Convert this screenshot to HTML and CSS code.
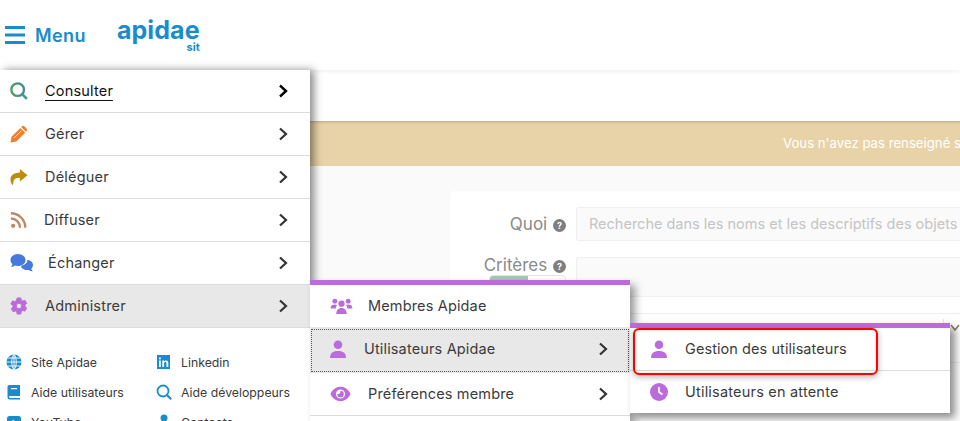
FILE: index.html
```html
<!DOCTYPE html>
<html lang="fr">
<head>
<meta charset="utf-8">
<title>Apidae</title>
<link rel="stylesheet" href="styles.css">
</head>
<body>
<header class="top">
  <svg class="burger" width="20" height="18" viewBox="0 0 20 18"><path d="M0 1.500h20M0 9h20M0 16.500h20" stroke="#1a8ccc" stroke-width="3"/></svg>
  <span class="menu-word">Menu</span>
  <div class="logo"><span class="logo-main">apidae</span><span class="logo-sub">sit</span></div>
</header>
<div class="subbar"></div>
<div class="banner">Vous n'avez pas renseigné s</div>
<main class="content">
  <section class="card">
    <div class="frow"><label class="lbl">Quoi <i class="q">?</i></label><div class="field ph">Recherche dans les noms et les descriptifs des objets</div></div>
    <div class="frow"><label class="lbl lbl-top">Critères <i class="q">?</i><span class="toggle"><b></b></span></label><div class="field tall"></div></div>
    <div class="frow"><span class="lbl"></span><div class="field select"><span class="sel-div"></span><svg class="sel-chev" viewBox="0 0 10 8"><path d="M1 1l4 5 4-5"/></svg></div></div>
  </section>
</main>

<nav class="menu l1menu">
  <a class="item"><svg class="ic" viewBox="0 0 20 20"><defs><linearGradient id="g" x1="0" x2="1"><stop offset="0" stop-color="#4f9f5f"/><stop offset="1" stop-color="#3f8e9c"/></linearGradient></defs><circle cx="8.500" cy="8.500" r="7" fill="none" stroke="url(#g)" stroke-width="2.600"/><path d="M13.500 13.500l5.200 5.200" stroke="#3f9a90" stroke-width="3"/></svg><span class="t current">Consulter</span><svg class="chev dark" viewBox="0 0 10 14"><path d="M2 1.500l6 5.500-6 5.500" /></svg></a>
  <a class="item"><svg class="ic" viewBox="0 0 20 20"><path d="M.5 19.500l1.200-6.500L11.500 3.200l5.300 5.300L7 18.300z" fill="#ee7f2d"/><path d="M13 1.700a2.300 2.300 0 0 1 3.200 0l2.100 2.100a2.300 2.300 0 0 1 0 3.200l-.6.600-5.300-5.300z" fill="#ee7f2d"/><path d="M4.500 14.500l8-8" stroke="#fff" stroke-width=".9"/></svg><span class="t">Gérer</span><svg class="chev" viewBox="0 0 10 14"><path d="M2 1.500l6 5.500-6 5.500"/></svg></a>
  <a class="item"><svg class="ic" viewBox="0 0 20 20"><path d="M11 1l8.500 7-8.500 7v-4c-4-.2-6 .6-7 3.500-.3 1.500-.3 3-.8 4.500-.5 0-2-1.500-2.700-5C.2 8 4 5.500 11 5z" fill="#bb8d09"/></svg><span class="t">Déléguer</span><svg class="chev" viewBox="0 0 10 14"><path d="M2 1.500l6 5.500-6 5.500"/></svg></a>
  <a class="item"><svg class="ic" viewBox="0 0 20 20"><circle cx="3.500" cy="16.500" r="2.400" fill="#b98a63"/><path d="M1 8.300a10 10 0 0 1 10 10.200M1 2.500a16 16 0 0 1 16 16" fill="none" stroke="#b98a63" stroke-width="2.600"/></svg><span class="t t-diff">Diffuser</span><svg class="chev" viewBox="0 0 10 14"><path d="M2 1.500l6 5.500-6 5.500"/></svg></a>
  <a class="item"><svg class="ic wide" viewBox="0 0 24 20"><path d="M8 1c4 0 7.500 2.500 7.500 6S12 13 8 13c-1 0-2-.1-2.800-.4C4 13.500 2.500 14 .8 14c1-.8 1.500-2 1.700-3C1 10 .5 8.500.5 7 .5 3.500 4 1 8 1z" fill="#4679dc"/><path d="M17 7c3.500 0 6 2.200 6 5 0 1.500-.6 2.600-1.600 3.500.1.900.6 2 1.500 2.700-1.600 0-3-.5-4.100-1.300-.6.100-1.200.2-1.800.2-3.200 0-5.800-1.800-6-4.300 3.600-.3 6.400-2.700 6.400-5.700z" fill="#4679dc"/></svg><span class="t t-ech">Échanger</span><svg class="chev" viewBox="0 0 10 14"><path d="M2 1.500l6 5.500-6 5.500"/></svg></a>
  <a class="item active"><svg class="ic" viewBox="0 0 20 20"><path fill-rule="evenodd" d="M8 1h4l.6 2.500 1.500.9 2.500-.8 2 3.400-1.900 1.800v1.700l1.900 1.800-2 3.400-2.500-.8-1.500.9L12 19H8l-.6-2.500-1.500-.9-2.500.8-2-3.400 1.900-1.800V9.500L.9 7.700l2-3.400 2.500.8 1.500-.9zM10 7a3 3 0 1 0 0 6 3 3 0 0 0 0-6z" fill="#bc6bdc" stroke="#bc6bdc" stroke-linejoin="round"/></svg><span class="t">Administrer</span><svg class="chev" viewBox="0 0 10 14"><path d="M2 1.500l6 5.500-6 5.500"/></svg></a>
  <div class="links">
    <a class="lnk"><svg class="lic" viewBox="0 0 16 16"><circle cx="8" cy="8" r="7.500" fill="#1a8ccc"/><path d="M.5 8h15M8 .5v15M2 4h12M2 12h12M8 .5C5 3 5 13 8 15.500M8 .5c3 2.500 3 12.500 0 15" fill="none" stroke="#fff" stroke-width=".9"/></svg>Site Apidae</a>
    <a class="lnk"><svg class="lic" viewBox="0 0 16 16"><rect x="1" y="1" width="13" height="14" fill="#1a8ccc"/><rect x="3" y="6.500" width="1.800" height="6.500" fill="#fff"/><rect x="3" y="3.500" width="1.800" height="1.800" fill="#fff"/><path d="M6.300 13V6.500H8v1c1-1.500 4.300-1.600 4.300 1.300V13h-1.800V9.300c0-1.700-2.400-1.500-2.400 0V13z" fill="#fff"/></svg>Linkedin</a>
    <a class="lnk"><svg class="lic" viewBox="0 0 16 16"><path d="M3 1h11v11H4a1 1 0 0 0 0 2h10v1.500H3.500A2 2 0 0 1 1.500 13.500V2.500A1.500 1.500 0 0 1 3 1z" fill="#1a8ccc"/><rect x="5" y="4" width="6" height="1.200" fill="#fff"/></svg>Aide utilisateurs</a>
    <a class="lnk"><svg class="lic" viewBox="0 0 16 16"><circle cx="7" cy="7" r="5.500" fill="none" stroke="#1a8ccc" stroke-width="1.800"/><path d="M11 11l4.200 4.200" stroke="#1a8ccc" stroke-width="2"/></svg>Aide développeurs</a>
    <a class="lnk"><svg class="lic" viewBox="0 0 16 16"><rect x="1" y="2" width="14" height="12" rx="2.500" fill="#1a8ccc"/><path d="M6.500 5.500l4 2.500-4 2.500z" fill="#fff"/></svg>YouTube</a>
    <a class="lnk"><svg class="lic" viewBox="0 0 16 16"><circle cx="8" cy="4" r="3.500" fill="#1a8ccc"/><path d="M2 16c0-4 2-6 6-6s6 2 6 6z" fill="#1a8ccc"/></svg>Contacts</a>
  </div>
</nav>

<nav class="menu l2menu">
  <a class="sub"><svg class="sic wide2" viewBox="0 0 24 20"><circle cx="5" cy="4.500" r="2.600"/><circle cx="19" cy="4.500" r="2.600"/><circle cx="12" cy="7" r="3.300"/><path d="M.5 12c0-3 2-4 4.500-4 1 0 1.600.2 2.200.6-.8 1-1.200 2-1.200 3.400zM23.500 12c0-3-2-4-4.500-4-1 0-1.600.2-2.200.6.800 1 1.200 2 1.200 3.400zM6.500 18c0-4 2-6.500 5.500-6.500s5.500 2.500 5.500 6.500z"/></svg><span class="st">Membres Apidae</span></a>
  <a class="sub focus"><svg class="sic user" viewBox="0 0 16 18"><circle cx="8" cy="4.800" r="4.300"/><path d="M0 18c0-4.500 2.500-7 8-7s8 2.500 8 7z"/></svg><span class="st">Utilisateurs Apidae</span><svg class="chev" viewBox="0 0 10 14"><path d="M2 1.500l6 5.500-6 5.500"/></svg></a>
  <a class="sub"><svg class="sic eye" viewBox="0 0 22 18"><path fill-rule="evenodd" d="M11 1.500c5 0 9 3.700 10.500 7.500C20 12.800 16 16.500 11 16.500S2 12.800.5 9C2 5.200 6 1.500 11 1.500zm0 2.700a4.800 4.800 0 1 0 0 9.600 4.800 4.800 0 0 0 0-9.600z"/><path d="M11 5.500a3.500 3.500 0 1 1-3.500 3.500c1.700.6 4-1.200 3.500-3.500z"/></svg><span class="st">Préférences membre</span><svg class="chev" viewBox="0 0 10 14"><path d="M2 1.500l6 5.500-6 5.500"/></svg></a>
</nav>

<nav class="menu l3menu">
  <a class="sub3 marked"><svg class="sic user" viewBox="0 0 16 18"><circle cx="8" cy="4.800" r="4.300"/><path d="M0 18c0-4.500 2.500-7 8-7s8 2.500 8 7z"/></svg><span class="st3 st3-g">Gestion des utilisateurs</span></a>
  <a class="sub3"><svg class="sic clock" viewBox="0 0 18 18"><circle cx="9" cy="9" r="9"/><path d="M9 4v5l3.500 2.500" fill="none" stroke="#fff" stroke-width="1.700"/></svg><span class="st3">Utilisateurs en attente</span></a>
</nav>
</body>
</html>
```
FILE: styles.css
```css
* { box-sizing: border-box; }
html, body { margin: 0; height: 421px; overflow: hidden; }
body { background: #fafafa; font-family: "Inter", "Open Sans", sans-serif; color: #3b3b3b; position: relative; }

.top { height: 70px; background: #fff; display: flex; align-items: center; padding-left: 5px; box-shadow: 0 1px 4px rgba(0,0,0,.08); position: relative; }
.burger { display: block; }
.menu-word { font-size: 18px; font-weight: 600; letter-spacing: .4px; color: #1a8ccc; margin-left: 10px; }
.logo { display: flex; flex-direction: column; align-items: flex-end; margin-left: 31px; color: #1a8ccc; }
.logo-main { font-size: 25px; font-weight: 700; line-height: 24px; letter-spacing: .1px; }
.logo-sub { font-size: 11px; font-weight: 700; line-height: 10px; }

.subbar { height: 51px; background: #fff; }
.banner { height: 45px; background: #e8d3a9; color: #fff; font-size: 13.200px; line-height: 45px; padding-left: 783px; white-space: nowrap; overflow: hidden; box-shadow: inset 0 3px 3px -2px rgba(0,0,0,.2); }
.content { padding: 25px 0 0 450px; }
.card { background: #fff; border-radius: 5px 0 0 5px; height: 240px; padding-top: 16px; }
.frow { display: flex; align-items: flex-start; margin-bottom: 16px; }
.lbl { width: 116px; text-align: right; font-size: 17px; color: #8a8a8a; line-height: 34px; flex: none; position: relative; }
.lbl-top { line-height: 17px; }
.q { display: inline-block; width: 13px; height: 13px; border-radius: 50%; background: #7f7f7f; color: #fff; font: 700 9px/13px "Inter", sans-serif; text-align: center; vertical-align: 1px; margin-left: 1px; }
.toggle { position: absolute; left: 39px; top: 18px; width: 77px; height: 20px; border: 1px solid #e5e5e5; border-radius: 4px; overflow: hidden; background: #fff; }
.toggle b { display: block; width: 38px; height: 20px; background: #a2c9b0; }
.field { margin-left: 10px; flex: 1; height: 34px; background: #fafafa; border: 1px solid #efefef; border-right: 0; border-radius: 3px 0 0 3px; font-size: 14.500px; line-height: 32px; padding-left: 12px; color: #c4c4c4; white-space: nowrap; overflow: hidden; }
.tall { height: 40px; }
.select { height: 50px; background: #fff; display: flex; align-items: flex-start; justify-content: flex-end; padding: 5px 0 0; margin-left: 10px; }
.sel-div { width: 1px; height: 30px; background: #e5e5e5; margin-right: 6px; }
.sel-chev { width: 10px; height: 8px; margin-top: 5px; }
.sel-chev path { fill: none; stroke: #8a7a6a; stroke-width: 1.500; }

.menu { position: absolute; background: #fff; }
.l1menu { left: 0; top: 70px; width: 310px; height: 351px; overflow: hidden; box-shadow: 4px 0 8px rgba(0,0,0,.45); }
.item { display: flex; align-items: center; height: 43px; border-bottom: 1px solid #dcdcdc; padding: 0 22px 0 10px; font-size: 14.500px; letter-spacing: .2px; }
.item.active { background: #e8e8e8; }
.ic { width: 18px; height: 18px; flex: none; margin-right: 17px; margin-top: -1px; }
.ic.wide { width: 24px; height: 20px; margin-right: 14px; }
.t { flex: 1; margin-top: -2px; }
.t-diff { margin-left: -1px; }
.current { flex: none; margin: 0 auto 0 0; color: #111; border-bottom: 1px solid #111; line-height: 18px; }
.chev { width: 10px; height: 14px; flex: none; margin-top: -1px; }
.chev path { fill: none; stroke: #333; stroke-width: 2.200; }
.chev.dark path { stroke: #000; stroke-width: 2.400; }

.links { display: grid; grid-template-columns: 150px 1fr; row-gap: 14px; padding: 26px 0 0 6px; font-size: 12.300px; }
.lnk { display: flex; align-items: center; height: 16px; white-space: nowrap; }
.lic { width: 16px; height: 16px; margin-right: 9px; flex: none; }

.l2menu { left: 310px; top: 280px; width: 320px; height: 141px; border-top: 5px solid #bc6bdc; box-shadow: 5px 5px 8px rgba(0,0,0,.4); }
.sub { display: flex; align-items: center; height: 42px; padding: 0 22px 0 20px; font-size: 14.500px; letter-spacing: .15px; }
.sub.focus { height: 46px; padding-bottom: 2px; background: #e8e8e8; position: relative; }
.sub.focus::after { content: ""; position: absolute; left: 1px; right: 1px; top: 2px; height: 41px; border: 1px dotted #555; }
.sub:last-child { height: 43px; border-bottom: 1px solid #dcdcdc; }
.sic { fill: #bc6bdc; flex: none; }
.wide2 { width: 23px; height: 19px; margin-right: 15px; }
.user { width: 16px; height: 18px; margin-right: 18px; }
.eye { width: 21px; height: 18px; margin-right: 17px; }
.clock { width: 18px; height: 18px; margin: 0 17px 0 -1px; }
.st { flex: 1; margin-top: -1px; }

.l3menu { left: 630px; top: 323px; width: 320px; height: 90px; border-top: 5px solid #bc6bdc; box-shadow: 5px 5px 8px rgba(0,0,0,.45); }
.sub3 { display: flex; align-items: center; height: 42px; padding-left: 21px; font-size: 14.500px; letter-spacing: .2px; }
.st3 { margin-top: -1px; }
.st3-g { letter-spacing: .07px; }
.sub3:last-child { height: 43px; border-top: 1px solid #dcdcdc; }
.marked { position: relative; }
.marked::after { content: ""; position: absolute; left: 3px; top: 0; width: 241px; height: 43px; border: 2px solid #f00; border-radius: 6px; box-shadow: 0 2px 6px rgba(0,0,0,.3), inset 0 0 4px rgba(0,0,0,.15); }
```
